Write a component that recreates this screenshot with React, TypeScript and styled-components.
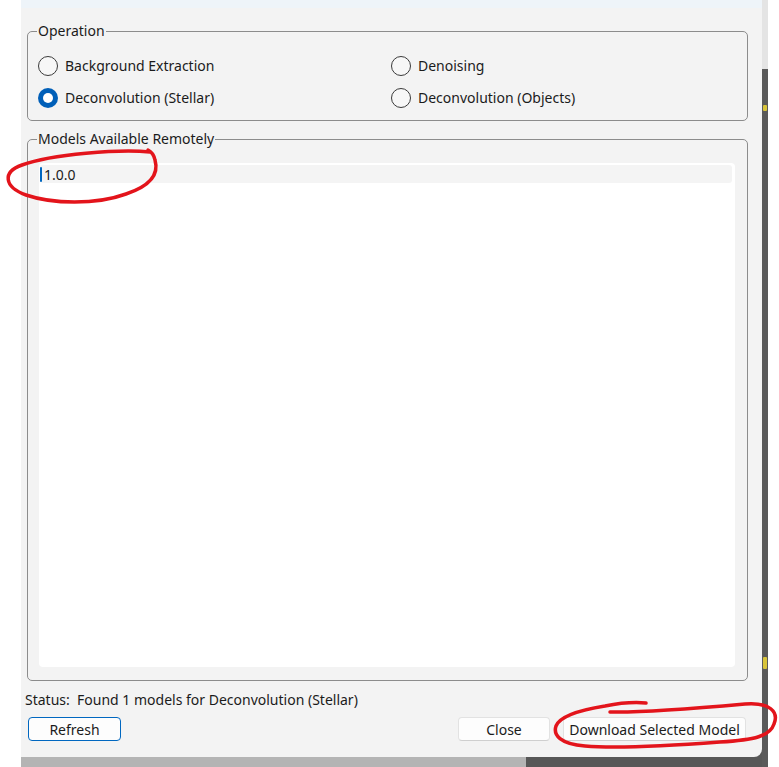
import React, { useState } from 'react'
import styled, { createGlobalStyle } from 'styled-components'

const operations = [
  'Background Extraction',
  'Denoising',
  'Deconvolution (Stellar)',
  'Deconvolution (Objects)',
]

const remoteModels = ['1.0.0']

const GlobalStyle = createGlobalStyle`
  html, body {
    margin: 0;
    padding: 0;
    background: #ffffff;
  }
  body {
    font-family: 'Noto Sans', 'Open Sans', 'Liberation Sans', sans-serif;
    font-size: 14px;
    color: #1b1b1b;
  }
`

const Screen = styled.div`
  position: relative;
  width: 779px;
  height: 767px;
  display: flex;
  overflow: hidden;
  background: #ffffff;
`

const LeftMargin = styled.div`
  width: 21px;
  flex: none;
`

const WindowColumn = styled.div`
  width: 741px;
  flex: none;
  display: flex;
  flex-direction: column;
  background: #575757;
`

const TitleStrip = styled.div`
  height: 8px;
  flex: none;
  background: #eef4f9;
`

const Dialog = styled.div`
  flex: 1;
  display: flex;
  flex-direction: column;
  padding: 15px 14px 16px 6px;
  background: #f3f3f3;
  border-bottom-right-radius: 8px;
`

const BottomBand = styled.div`
  height: 10px;
  flex: none;
  display: flex;
`

const BandPart = styled.div<{ $w: number; $c: string }>`
  width: ${p => p.$w}px;
  background: ${p => p.$c};
`

const ScrollStrip = styled.div`
  width: 6px;
  flex: none;
  display: flex;
  flex-direction: column;
`

const StripTop = styled.div`
  height: 69px;
  background: #e4e4e4;
`

const StripBottom = styled.div`
  flex: 1;
  background: #5a5a5a;
  position: relative;
`

const Speck = styled.div<{ $top: number; $h: number }>`
  position: absolute;
  left: 1px;
  top: ${p => p.$top}px;
  width: 4px;
  height: ${p => p.$h}px;
  background: #d8c43a;
  border-radius: 1px;
`

const Group = styled.fieldset<{ $h: number }>`
  margin: 0;
  min-width: 0;
  height: ${p => p.$h}px;
  box-sizing: border-box;
  border: 1px solid #8c8c8c;
  border-radius: 5px;
  padding: 0 12px 12px 11px;
`

const GroupTitle = styled.legend`
  margin-left: -2px;
  padding: 0 1px;
  line-height: 16px;
  font-size: 14px;
`

const OptionGrid = styled.div`
  display: grid;
  grid-template-columns: 353px 1fr;
  grid-auto-rows: 32px;
  margin-top: 11px;
  margin-left: -1px;
`

const Option = styled.label`
  display: flex;
  align-items: center;
  gap: 7px;
  cursor: default;
  padding-bottom: 1px;
`

const RadioDot = styled.span<{ $on: boolean }>`
  position: relative;
  width: 20px;
  height: 20px;
  box-sizing: border-box;
  border-radius: 50%;
  border: ${p => (p.$on ? 'none' : '1px solid #3a3a3a')};
  background: ${p => (p.$on ? '#005fb8' : '#f7f7f7')};
  flex: none;

  &::after {
    content: '';
    display: ${p => (p.$on ? 'block' : 'none')};
    position: absolute;
    left: 5px;
    top: 5px;
    width: 10px;
    height: 10px;
    border-radius: 50%;
    background: #ffffff;
  }
`

const ModelList = styled.div`
  height: 504px;
  box-sizing: border-box;
  margin-top: 16px;
  background: #ffffff;
  border-radius: 4px;
  padding: 2px 3px 2px 1px;
`

const ModelRow = styled.div<{ $current: boolean }>`
  height: 18px;
  display: flex;
  align-items: center;
  padding-left: 4px;
  position: relative;
  border-radius: 3px;
  background: ${p => (p.$current ? '#f4f4f4' : 'transparent')};

  &::before {
    content: '';
    display: ${p => (p.$current ? 'block' : 'none')};
    position: absolute;
    left: 0;
    top: 2px;
    width: 2px;
    height: 15px;
    border-radius: 1px;
    background: #0067c0;
  }
`

const StatusLine = styled.div`
  margin-top: 9px;
  height: 20px;
  line-height: 20px;
  margin-left: -2px;
  white-space: pre;
`

const ButtonRow = styled.div`
  margin-top: 7px;
  display: flex;
  align-items: center;
  gap: 13px;
  padding-left: 1px;
  padding-right: 2px;
`

const Spacer = styled.div`
  flex: 1;
`

const Button = styled.button<{ $w: number; $default?: boolean }>`
  width: ${p => p.$w}px;
  height: 24px;
  box-sizing: border-box;
  padding: 0;
  font: inherit;
  font-size: 14px;
  color: #1b1b1b;
  background: #fdfdfd;
  border: 1px solid ${p => (p.$default ? '#0067c0' : '#e2e2e2')};
  border-bottom-color: ${p => (p.$default ? '#0067c0' : '#cfcfcf')};
  border-radius: 4px;
`

const Scribbles = styled.svg`
  position: absolute;
  left: 0;
  top: 0;
  pointer-events: none;
`

export default function App() {
  const [op, setOp] = useState('Deconvolution (Stellar)')

  return (
    <>
      <GlobalStyle />
      <Screen>
        <LeftMargin />
        <WindowColumn>
          <TitleStrip />
          <Dialog>
            <Group $h={98}>
              <GroupTitle>Operation</GroupTitle>
              <OptionGrid>
                {operations.map(name => (
                  <Option key={name} onClick={() => setOp(name)}>
                    <RadioDot $on={op === name} />
                    {name}
                  </Option>
                ))}
              </OptionGrid>
            </Group>
            <div style={{ height: 10 }} />
            <Group $h={550}>
              <GroupTitle>Models Available Remotely</GroupTitle>
              <ModelList>
                {remoteModels.map((m, i) => (
                  <ModelRow key={m} $current={i === 0}>
                    {m}
                  </ModelRow>
                ))}
              </ModelList>
            </Group>
            <StatusLine>{`Status:  Found ${remoteModels.length} models for ${op}`}</StatusLine>
            <ButtonRow>
              <Button $w={93} $default>
                Refresh
              </Button>
              <Spacer />
              <Button $w={92}>Close</Button>
              <Button $w={183}>Download Selected Model</Button>
            </ButtonRow>
          </Dialog>
          <BottomBand>
            <BandPart $w={505} $c="#b4b4b4" />
            <BandPart $w={236} $c="#575757" />
          </BottomBand>
        </WindowColumn>
        <ScrollStrip>
          <StripTop />
          <StripBottom>
            <Speck $top={36} $h={6} />
            <Speck $top={588} $h={12} />
          </StripBottom>
        </ScrollStrip>
        <Scribbles width={779} height={767}>
          <g fill="none" stroke="#e3141b" strokeWidth={3.5} strokeLinecap="round" strokeLinejoin="round">
            <path d="M 150 152 C 120 149, 52 154, 22 165 C 2 172, 4 187, 26 195 C 52 204, 96 205, 126 194 C 150 186, 159 174, 155 160 C 154 155, 152 152, 148 150" />
            <path d="M 610 712 C 640 713, 700 708, 745 704 C 770 702, 779 712, 774 724 C 770 736, 755 740, 720 742 C 680 745, 620 749, 585 746 C 560 744, 553 735, 556 726 C 560 716, 580 710, 605 706 C 620 703, 635 702, 646 703" />
          </g>
        </Scribbles>
      </Screen>
    </>
  )
}
